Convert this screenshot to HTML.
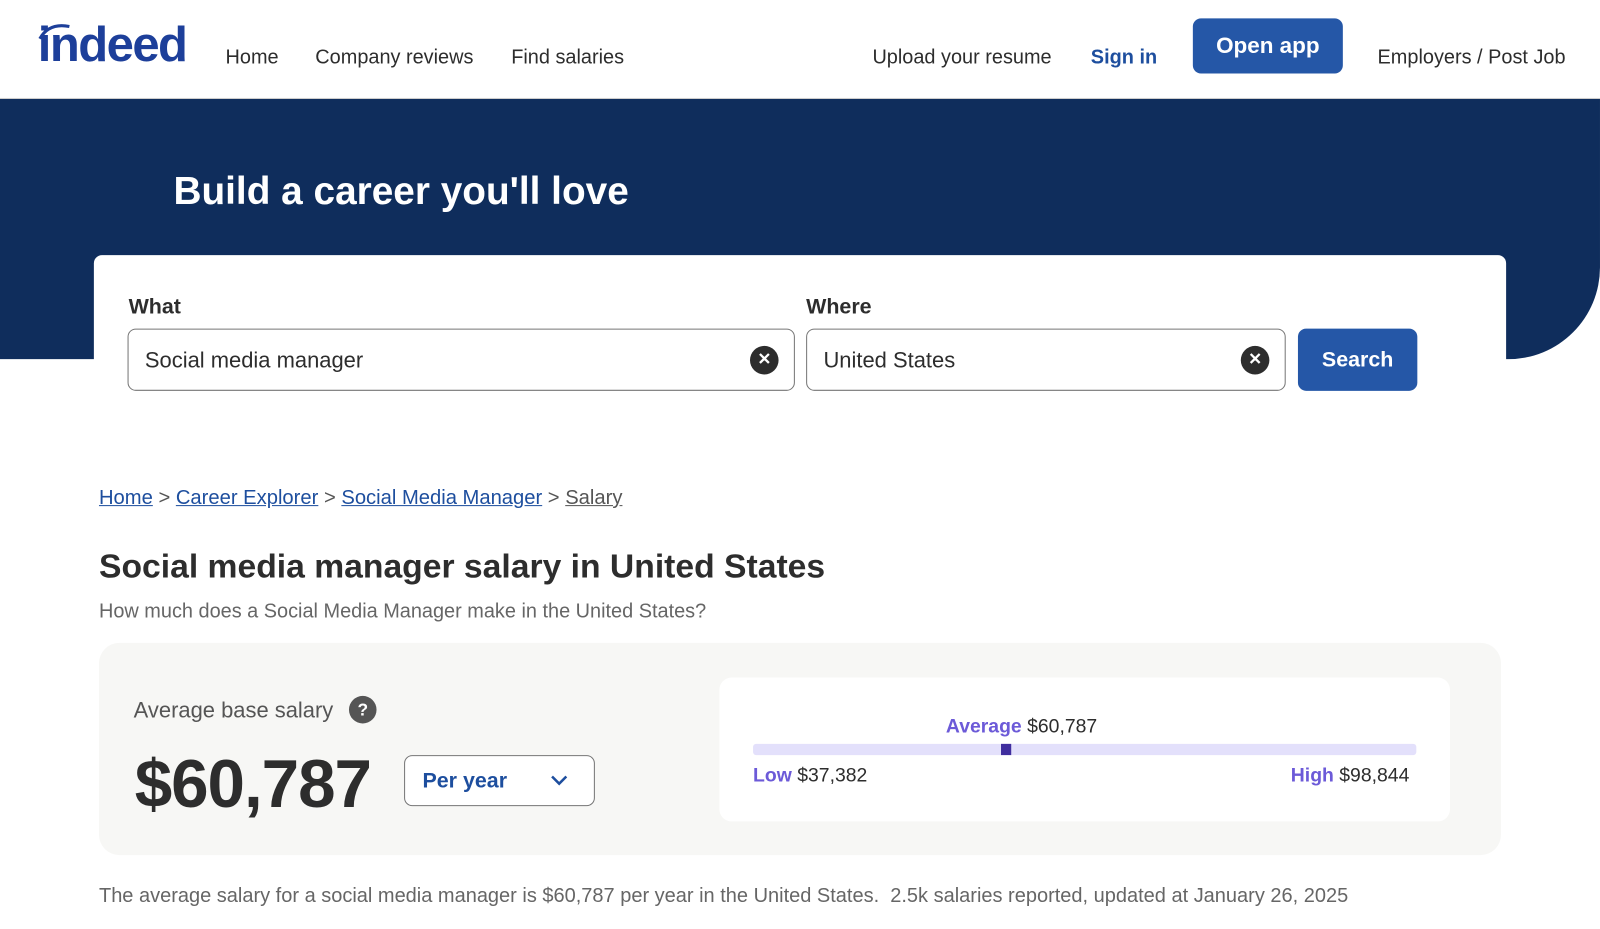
<!DOCTYPE html>
<html><head><meta charset="utf-8"><style>
*{margin:0;padding:0;box-sizing:border-box}
body{width:1600px;height:929px;background:#fff;font-family:"Liberation Sans",sans-serif;color:#2d2d2d;overflow:hidden}
#w{position:relative;width:1568px;height:910px;transform:scale(1.0204);transform-origin:0 0}
.a{position:absolute;white-space:nowrap}
.nav{font-size:19.5px;color:#2d2d2d}
</style></head><body><div id="w">
<div class="a" style="left:37px;top:17px;font-size:48px;font-weight:bold;color:#1d3f9a;letter-spacing:-1.5px">indeed</div>
<svg class="a" style="left:36px;top:20px" width="40" height="20"><path d="M3 18 Q12 2 32 6" stroke="#1d3f9a" stroke-width="3" fill="none"/></svg>
<div class="a nav" style="left:221px;top:45px">Home</div>
<div class="a nav" style="left:309px;top:45px">Company reviews</div>
<div class="a nav" style="left:501px;top:45px">Find salaries</div>
<div class="a nav" style="left:855px;top:45px">Upload your resume</div>
<div class="a" style="left:1069px;top:45px;font-size:19.5px;font-weight:bold;color:#1d4e9e">Sign in</div>
<div class="a" style="left:1169px;top:18px;width:147px;height:54px;background:#2557a7;border-radius:8px;color:#fff;font-size:22px;font-weight:bold;text-align:center;line-height:54px">Open app</div>
<div class="a nav" style="left:1350px;top:45px">Employers / Post Job</div>
<div class="a" style="left:0;top:96px;width:1600px;height:1px;background:#ccc"></div>
<div class="a" style="left:0;top:97px;width:1568px;height:255px;background:#0f2d5c;border-bottom-right-radius:90px"></div>
<div class="a" style="left:170px;top:167px;font-size:38px;font-weight:bold;color:#fff">Build a career you'll love</div>
<div class="a" style="left:92px;top:250px;width:1384px;height:160px;background:#fff;border-radius:8px"></div>
<div class="a" style="left:126px;top:289px;font-size:21px;font-weight:bold">What</div>
<div class="a" style="left:790px;top:289px;font-size:21px;font-weight:bold">Where</div>
<div class="a" style="left:125px;top:322px;width:654px;height:61px;border:1px solid #767676;border-radius:8px;font-size:21.5px;line-height:61px;padding-left:16px">Social media manager</div>
<div class="a" style="left:790px;top:322px;width:470px;height:61px;border:1px solid #767676;border-radius:8px;font-size:21.5px;line-height:61px;padding-left:16px">United States</div>
<div class="a" style="left:735px;top:339px;width:28px;height:28px;border-radius:50%;background:#2d2d2d;color:#fff;font-size:16px;font-weight:bold;text-align:center;line-height:28px">✕</div>
<div class="a" style="left:1216px;top:339px;width:28px;height:28px;border-radius:50%;background:#2d2d2d;color:#fff;font-size:16px;font-weight:bold;text-align:center;line-height:28px">✕</div>
<div class="a" style="left:1272px;top:322px;width:117px;height:61px;background:#2557a7;border-radius:8px;color:#fff;font-size:21px;font-weight:bold;text-align:center;line-height:62px">Search</div>
<div class="a" style="left:97px;top:477px;font-size:19.8px;color:#1d4e9e"><u>Home</u> <span style="color:#555">&gt;</span> <u>Career Explorer</u> <span style="color:#555">&gt;</span> <u>Social Media Manager</u> <span style="color:#555">&gt;</span> <u style="color:#555">Salary</u></div>
<div class="a" style="left:97px;top:536px;font-size:33px;font-weight:bold">Social media manager salary in United States</div>
<div class="a" style="left:97px;top:588px;font-size:19.5px;color:#666">How much does a Social Media Manager make in the United States?</div>
<div class="a" style="left:97px;top:630px;width:1374px;height:208px;background:#f7f7f5;border-radius:20px"></div>
<div class="a" style="left:131px;top:684px;font-size:21.5px;color:#555">Average base salary</div>
<div class="a" style="left:342px;top:682px;width:27px;height:27px;border-radius:50%;background:#555;color:#fff;font-size:17px;font-weight:bold;text-align:center;line-height:27px">?</div>
<div class="a" style="left:132px;top:730px;font-size:66px;font-weight:bold;letter-spacing:-1px">$60,787</div>
<div class="a" style="left:396px;top:740px;width:187px;height:50px;border:1px solid #767676;border-radius:8px;background:#fff;font-size:21px;font-weight:bold;color:#1d4e9e;line-height:50px;padding-left:17px">Per year</div>
<svg class="a" style="left:539px;top:758px" width="18" height="14"><path d="M2 3 L9 10 L16 3" stroke="#1d4e9e" stroke-width="2.5" fill="none"/></svg>
<div class="a" style="left:705px;top:664px;width:716px;height:141px;background:#fff;border-radius:12px"></div>
<div class="a" style="left:927px;top:702px;font-size:19px"><b style="color:#6c5ad8">Average</b> $60,787</div>
<div class="a" style="left:738px;top:729px;width:650px;height:11px;background:#e3e0fb;border-radius:3px"></div>
<div class="a" style="left:981px;top:729px;width:10px;height:11px;background:#3f2d9e"></div>
<div class="a" style="left:738px;top:750px;font-size:19px"><b style="color:#6c5ad8">Low</b> $37,382</div>
<div class="a" style="left:1265px;top:750px;font-size:19px"><b style="color:#6c5ad8">High</b> $98,844</div>
<div class="a" style="left:97px;top:867px;font-size:19.6px;color:#666">The average salary for a social media manager is $60,787 per year in the United States.&nbsp; 2.5k salaries reported, updated at January 26, 2025</div>
</div></body></html>
